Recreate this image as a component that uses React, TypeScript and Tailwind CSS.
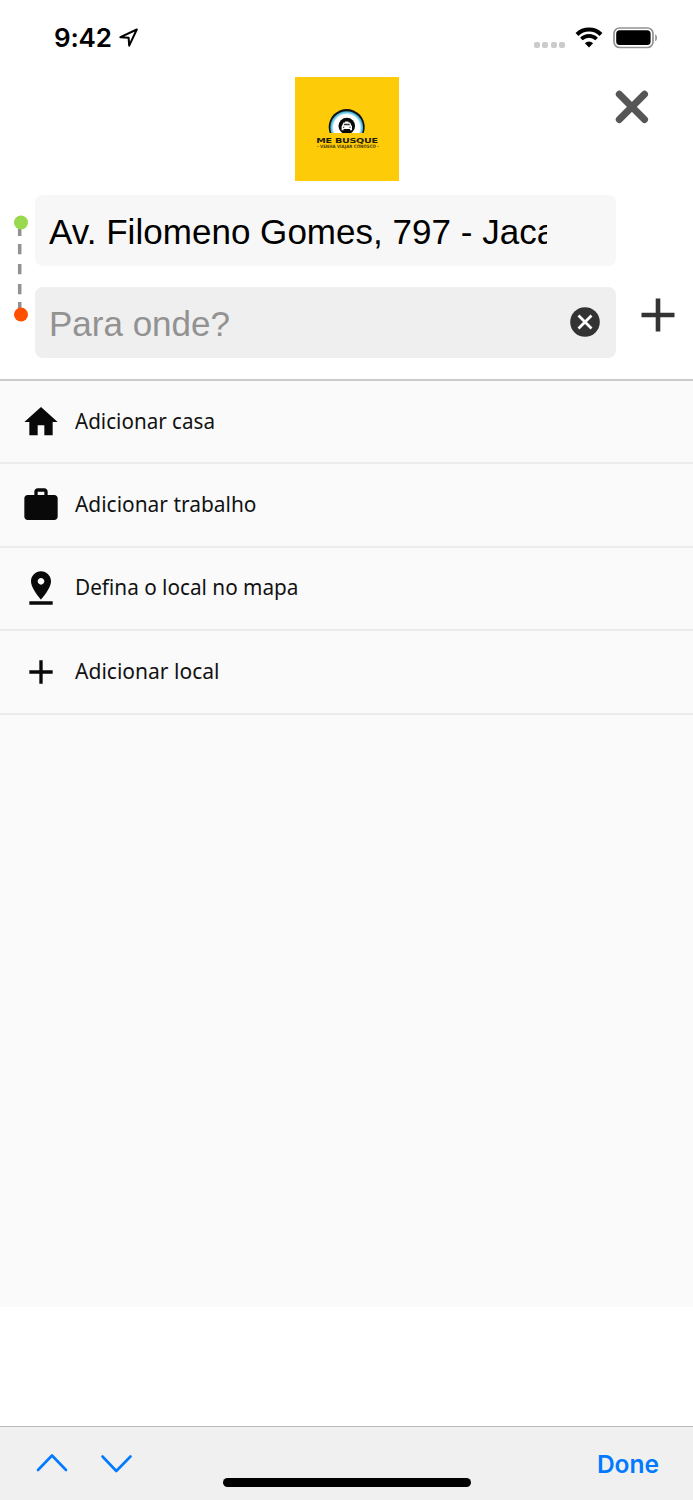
import type { ReactNode } from 'react';

type Shortcut = {
  label: string;
  icon: ReactNode;
  textWidth: number;
};

const SHORTCUTS: Shortcut[] = [
  {
    label: 'Adicionar casa',
    textWidth: 140,
    icon: <path d="M10 20v-6h4v6h5v-8h3L12 3 2 12h3v8z" />,
  },
  {
    label: 'Adicionar trabalho',
    textWidth: 181.5,
    icon: (
      <path d="M20 6h-4V4c0-1.11-.89-2-2-2h-4c-1.11 0-2 .89-2 2v2H4c-1.11 0-1.99.89-1.99 2L2 19c0 1.11.89 2 2 2h16c1.11 0 2-.89 2-2V8c0-1.11-.89-2-2-2zm-6 0h-4V4h4v2z" />
    ),
  },
  {
    label: 'Defina o local no mapa',
    textWidth: 223.5,
    icon: (
      <path d="M18 8c0-3.31-2.69-6-6-6S6 4.69 6 8c0 4.5 6 11 6 11s6-6.5 6-11zm-8 0c0-1.1.9-2 2-2s2 .9 2 2-.89 2-2 2c-1.1 0-2-.9-2-2zM5 20v2h14v-2H5z" />
    ),
  },
  {
    label: 'Adicionar local',
    textWidth: 144.5,
    icon: <path d="M19 13h-6v6h-2v-6H5v-2h6V5h2v6h6v2z" />,
  },
];

function StatusBar() {
  return (
    <div className="flex h-[77px] items-start justify-between pl-[54px] pr-[35px] pt-[21px]">
      <div className="flex items-start">
        <span className="font-[Inter,sans-serif] text-[26px] font-semibold leading-[34px] tracking-[-0.2px] text-black">
          9:42
        </span>
        <svg className="ml-[7px] mt-[7px]" width="20" height="20" viewBox="0 0 20 20" fill="none">
          <path d="M1.4 9.2 17.8 1.5 10.2 17.6 9.6 9.7z" stroke="#000" strokeWidth="2" strokeLinejoin="round" />
        </svg>
      </div>
      <div className="flex items-start">
        <div className="mt-[21px] flex gap-[2.5px]">
          {[0, 1, 2, 3].map(i => (
            <span key={i} className="size-[6px] rounded-[2px] bg-[#cbcbcb]" />
          ))}
        </div>
        <svg className="ml-[10px] mt-[6px]" width="28" height="21" viewBox="0 0 28 21" fill="none" stroke="#000">
          <path d="M2 7.4a17.2 17.2 0 0 1 24 0" strokeWidth="4.2" />
          <path d="M6.4 12a11 11 0 0 1 15.2 0" strokeWidth="3.8" />
          <path d="M14 20.4 9.9 16.3a5.8 5.8 0 0 1 8.2 0z" fill="#000" stroke="none" />
        </svg>
        <svg className="ml-[10px] mt-[6px]" width="45" height="22" viewBox="0 0 45 22">
          <rect x="1" y="1" width="39" height="19.5" rx="5.5" fill="none" stroke="#929292" strokeWidth="1.7" />
          <rect x="3.2" y="3.3" width="34.4" height="14.8" rx="3.5" />
          <path d="M42.2 7.3c2.4 1 2.4 6 0 7z" fill="#929292" />
        </svg>
      </div>
    </div>
  );
}

function Logo() {
  return (
    <svg width="104" height="104" viewBox="0 0 104 104">
      <defs>
        <clipPath id="dome">
          <rect x="30" y="28" width="44" height="28" />
        </clipPath>
        <radialGradient id="ring">
          <stop offset="0.8" stopColor="#fff" />
          <stop offset="0.91" stopColor="#6bcbe9" />
          <stop offset="1" stopColor="#3aa9ce" />
        </radialGradient>
      </defs>
      <rect width="104" height="104" fill="#fecb09" />
      <g clipPath="url(#dome)">
        <circle cx="51.7" cy="50.1" r="18" fill="#111" />
        <circle cx="51.7" cy="50.6" r="16.4" fill="url(#ring)" />
        <circle cx="51.8" cy="49" r="8.3" fill="#080808" />
        <path
          d="M50.1 44.6h3.4v1h1.6l1.2 2.7.7.9v4h-1.9v-1.1h-6.6v1.1h-1.9v-4l.7-.9 1.2-2.7h1.6z"
          fill="#fff"
        />
        <path d="M49.3 46.7h5l.7 1.6h-6.4zM47.9 49.8h1.4v.9h-1.4zM54.3 49.8h1.4v.9h-1.4z" fill="#333" />
      </g>
      {/* wide lettering */}
      <g transform="scale(1.3 1)">
        <text
          x="16.4"
          y="65.6"
          textLength="47.5"
          className="font-['DejaVu_Sans',sans-serif] text-[7.4px] font-bold"
          fill="#241d08"
        >
          ME BUSQUE
        </text>
      </g>
      <text
        x="22"
        y="71.2"
        textLength="62"
        lengthAdjust="spacingAndGlyphs"
        className="font-['DejaVu_Sans',sans-serif] text-[4.6px] font-bold"
        fill="#4f410d"
      >
        - VENHA VIAJAR CONOSCO -
      </text>
    </svg>
  );
}

function RouteMarker() {
  return (
    <svg className="mt-5 shrink-0" width="35" height="108" viewBox="0 0 35 108">
      <path d="M19.7 14v7M19.7 29v10.3M19.7 49v10.3M19.7 69v10.3M19.7 87v8" stroke="#919191" strokeWidth="3.5" />
      <circle cx="21" cy="7.5" r="7" fill="#98d94f" />
      <circle cx="21" cy="99.6" r="7" fill="#ff4f00" />
    </svg>
  );
}

function RouteForm() {
  return (
    <div className="flex h-[184px] pt-[14px]">
      <RouteMarker />
      <div className="flex w-[581px] flex-col gap-[21px] font-['Liberation_Sans',sans-serif] text-[35px] leading-[71px]">
        <div className="h-[71px] rounded-lg bg-[#f7f7f7] pl-[14px] pr-[69px] pt-px">
          <div className="h-[70px] overflow-hidden whitespace-nowrap tracking-[0.03px] text-black">
            Av. Filomeno Gomes, 797 - Jaca
          </div>
        </div>
        <div className="flex h-[71px] items-center justify-between rounded-lg bg-[#efefef] pl-[14px] pr-4">
          <span className="pt-px text-[#929292]">Para onde?</span>
          <svg className="-mt-[2px]" width="30" height="30" viewBox="0 0 30 30">
            <circle cx="15" cy="15" r="14.8" fill="#333" />
            <path d="m8.5 8.5 13 13M21.5 8.5l-13 13" stroke="#fff" strokeWidth="2.8" />
          </svg>
        </div>
      </div>
      <svg className="ml-[25px] mt-[103px]" width="34" height="34" viewBox="0 0 34 34">
        <path d="M17 .5v33M.5 17h33" stroke="#333" strokeWidth="4.6" />
      </svg>
    </div>
  );
}

function ShortcutRow({ label, icon, textWidth }: Shortcut) {
  return (
    <li className="flex h-[83.4px] items-center border-b-2 border-[#ececec] pl-[21px]">
      <svg width="40" height="40" viewBox="0 0 24 24" fill="#090909">
        {icon}
      </svg>
      <svg className="ml-[14px]" width="300" height="40">
        <text
          x="0"
          y="27"
          textLength={textWidth}
          lengthAdjust="spacingAndGlyphs"
          className="font-['Noto_Sans',sans-serif] text-[22px]"
          fill="#121212"
        >
          {label}
        </text>
      </svg>
    </li>
  );
}

function KeyboardBar() {
  return (
    <div className="relative flex h-[74px] justify-between border-t border-[#b9bcbc] bg-[#f0f0f0] pl-9 pr-[34px]">
      <svg className="mt-[26px]" width="98" height="24" viewBox="0 0 98 24" fill="none">
        <path
          d="M2 17 16 2.5 30 17M66.5 3.5 80.3 18 94.5 3.5"
          stroke="#027aff"
          strokeWidth="2.6"
          strokeLinecap="round"
          strokeLinejoin="round"
        />
      </svg>
      <span className="mt-[19px] font-[Inter,sans-serif] text-[24.5px] font-semibold leading-9 text-[#027aff]">Done</span>
      <div className="absolute bottom-[13px] left-[222.5px] h-[9px] w-[248px] rounded-full bg-black" />
    </div>
  );
}

export default function App() {
  return (
    <div className="flex h-[1500px] w-[693px] flex-col overflow-hidden bg-white">
      <StatusBar />
      <header className="grid h-[104px] grid-cols-[1fr_104px_1fr]">
        <div className="col-start-2">
          <Logo />
        </div>
        <div className="flex justify-end pr-11 pt-[13px]">
          <svg width="34" height="34" viewBox="0 0 34 34">
            <path d="m4.3 4.3 25.2 25.2M29.5 4.3 4.3 29.5" stroke="#565656" strokeWidth="7" strokeLinecap="round" />
          </svg>
        </div>
      </header>
      <RouteForm />
      <main className="mt-[14px] h-[928px] border-t-2 border-[#cbcbcb] bg-[#fafafa]">
        <ul>
          {SHORTCUTS.map(item => (
            <ShortcutRow key={item.label} {...item} />
          ))}
        </ul>
      </main>
      <div className="flex-1" />
      <KeyboardBar />
    </div>
  );
}
